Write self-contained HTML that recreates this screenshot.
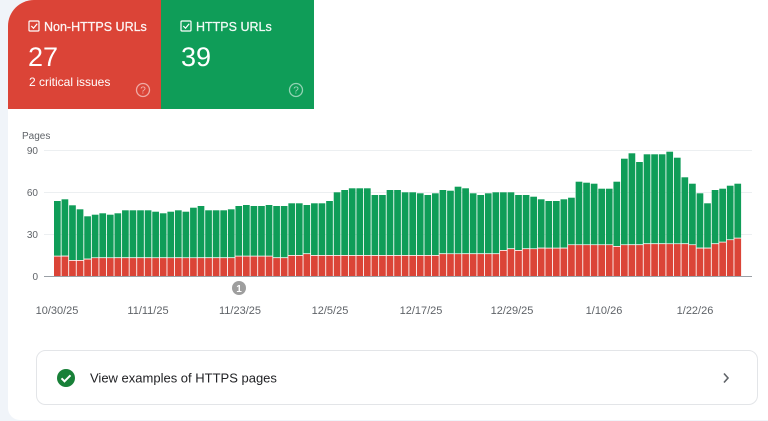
<!DOCTYPE html><html><head><style>
body{margin:0;width:768px;height:421px;background:#f0f4f9;font-family:"Liberation Sans",sans-serif;overflow:hidden;position:relative}
.card{position:absolute;left:8px;top:0;width:760px;height:420px;background:#fff;border-radius:26px 0 0 12px;overflow:hidden}
.box{position:absolute;width:153px;height:109px;top:0}
</style></head><body>
<div class="card">
<div class="box" style="left:0;background:#db4437"></div>
<div class="box" style="left:153px;background:#0f9d58"></div>
</div>
<svg width="768" height="421" style="position:absolute;left:0;top:0" font-family="Liberation Sans, sans-serif">
<g fill="none" stroke="#fff" stroke-width="1.2"><rect x="29" y="21" width="10" height="10" rx="1"/><path d="M31.3 26l2.2 2.2 3.7-4.4"/>
<rect x="181" y="21" width="10" height="10" rx="1"/><path d="M183.3 26l2.2 2.2 3.7-4.4"/></g>
<text x="44" y="31" fill="#fff" font-size="12.5" opacity=".95" stroke="#fff" stroke-width=".25">Non-HTTPS URLs</text>
<text x="196" y="31" fill="#fff" font-size="12.5" opacity=".95" stroke="#fff" stroke-width=".25">HTTPS URLs</text>
<text x="28" y="66" fill="#fff" font-size="27">27</text>
<text x="181" y="66" fill="#fff" font-size="27">39</text>
<text x="29" y="86" fill="#fff" font-size="12">2 critical issues</text>
<g fill="none" stroke="#fff" stroke-opacity=".55" stroke-width="1.3"><circle cx="143" cy="90" r="6.5"/><circle cx="296" cy="90" r="6.5"/></g>
<g fill="#fff" fill-opacity=".6" font-size="10" text-anchor="middle"><text x="143" y="93.5">?</text><text x="296" y="93.5">?</text></g>
<text x="22" y="139" fill="#5f6368" font-size="10">Pages</text>
<g fill="#5f6368" font-size="10" text-anchor="end"><text x="38" y="154">90</text><text x="38" y="196">60</text><text x="38" y="238">30</text><text x="38" y="280">0</text></g>
<g stroke="#eceff1"><path d="M44 150.5H752M44 192.5H752M44 234.5H752"/></g>
<g id="bars"></g>
<path d="M44 276.5H752" stroke="#9aa0a6"/>
<circle cx="239" cy="288" r="7" fill="#9e9e9e"/><text x="239" y="292" fill="#fff" font-size="10" font-weight="bold" text-anchor="middle">1</text>
<g fill="#5f6368" font-size="11" text-anchor="middle"><text x="57" y="314">10/30/25</text><text x="148" y="314">11/11/25</text><text x="240" y="314">11/23/25</text><text x="330" y="314">12/5/25</text><text x="421" y="314">12/17/25</text><text x="512" y="314">12/29/25</text><text x="604" y="314">1/10/26</text><text x="695" y="314">1/22/26</text></g>
<rect x="36.5" y="350.5" width="721" height="54" rx="9" fill="#fff" stroke="#e3e5e8"/>
<circle cx="66" cy="378" r="9" fill="#188038"/><path d="M61.5 378.3l3 3 6-6" fill="none" stroke="#fff" stroke-width="2"/>
<text x="90" y="382.5" fill="#202124" font-size="13">View examples of HTTPS pages</text>
<path d="M724 373.5l4 4.5-4 4.5" fill="none" stroke="#5f6368" stroke-width="1.6"/>
</svg>
<script>
var tp=[183,178,196,208,229,224,220,224,220,211,211,211,211,215,220,215,211,215,203,198,211,211,211,208,198,195,198,198,195,198,198,190,190,195,190,190,183,157,150,145,145,145,165,165,150,150,
157,157,160,165,160,150,152,140,145,160,165,160,157,157,157,165,165,170,178,183,183,178,173,125,128,131,146,146,125,56,40,66,43,43,43,35,53,112,131,160,190,150,146,137,131];
var rd=[347,347,360,360,356];for(var i=0;i<19;i++)rd.push(352);for(i=0;i<5;i++)rd.push(347);rd.push(352,352,345,345,340);for(i=0;i<12;i++)rd.push(345);
rd=rd.concat([345,345,345,345,345,340,340,340,340,340,340,340,340,330,325,330,325,325,323,323,323,323,313,313,313,313,313,313,318,313,313,313,310,310,310,310,310,310,313,323,323,310,305,298,293]);
var h='';for(i=0;i<91;i++){var x=54+i*7.56,t=140+tp[i]/3,r=140+rd[i]/3;
h+='<rect x="'+x.toFixed(2)+'" y="'+t.toFixed(1)+'" width="6.7" height="'+(r-t).toFixed(1)+'" fill="#0f9d58"/>';
h+='<rect x="'+x.toFixed(2)+'" y="'+(r+0.8).toFixed(1)+'" width="6.7" height="'+(276-r-0.8).toFixed(1)+'" fill="#db4437"/>';}
document.getElementById('bars').innerHTML=h;
</script>
</body></html>
